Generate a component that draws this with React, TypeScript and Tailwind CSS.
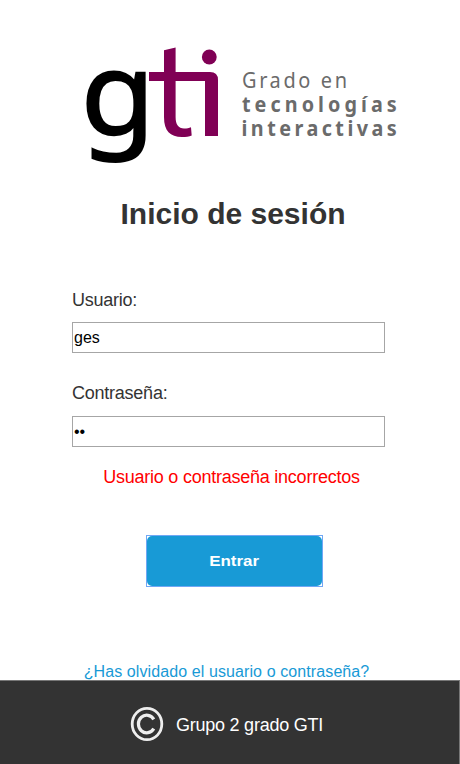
function Logo() {
  return (
    <svg width="312" height="122" viewBox="86 45 312 122" className="ml-[86px] block overflow-visible" role="img">
      <text transform="translate(80.8 134.3) scale(1.045 1)" fontSize="115.5" fontFamily="'Noto Sans', sans-serif" fill="#000" stroke="#000" strokeWidth="1.8">g</text>
      <g fill="#800055">
        <path d="M164 50.3 L175.6 47.5 V117 C175.6 124.5 178.5 128.5 184 128.5 C187 128.5 189 128.1 191 127.2 L191.7 135.4 C189 136.5 186 137 182 137 C170 137 164 131 164 117 Z" />
        <path d="M149 72 H210 Q218 72 218 80 V136 H205 V81 H149 Z" />
        <circle cx="209.3" cy="57" r="7.4" />
      </g>
      <g fill="#6b6b6b" fontFamily="'Noto Sans', sans-serif">
        <text transform="translate(242 88) scale(0.95 1)" fontSize="21" textLength="110.5">Grado en</text>
        <text transform="translate(242 112) scale(0.9 1)" fontSize="22" fontWeight="700" textLength="172">tecnologías</text>
        <text transform="translate(241.5 136) scale(0.9 1)" fontSize="22" fontWeight="700" textLength="172.5">interactivas</text>
      </g>
    </svg>
  );
}

export default function App() {
  return (
    <div className="flex h-[764px] w-[460px] flex-col overflow-hidden bg-white pt-[45px] font-['Liberation_Sans',Arial,sans-serif] text-[#333]">
      <Logo />
      <h1 className="mt-[29px] pl-[6px] text-center text-[30px] leading-[36px] font-bold">Inicio de sesión</h1>
      <form className="flex flex-col pr-[75px] pl-[72px]" onSubmit={(e) => e.preventDefault()}>
        <label htmlFor="user" className="mt-[58px] h-5 text-lg leading-5 tracking-[-0.24px]">Usuario:</label>
        <input id="user" defaultValue="ges" className="mt-3 h-[31px] border border-[#a6a6a6] px-px text-base text-black outline-none" />
        <label htmlFor="pass" className="mt-[30px] h-5 text-lg leading-5 tracking-[-0.24px]">Contraseña:</label>
        <input id="pass" type="password" defaultValue="12" className="mt-[13px] h-[31px] border border-[#a6a6a6] px-px text-base text-black outline-none" />
        <p className="mt-5 pl-[6px] text-center text-lg leading-5 tracking-[-0.24px] whitespace-nowrap text-[#ff0000]">Usuario o contraseña incorrectos</p>
        <div className="mt-[48px] ml-[74px] h-[52px] w-[177px] border border-[#70a7f5]">
          <button className="block h-[50px] w-[175px] rounded-[5px] bg-[#189ad6] text-[15px] font-bold text-white">
            <span className="inline-block scale-x-[1.13] pt-px">Entrar</span>
          </button>
        </div>
      </form>
      <a className="mt-[75px] block h-[18px] shrink-0 pr-[7px] text-center text-base leading-5 tracking-[0.1px] whitespace-nowrap text-[#189ad6]">¿Has olvidado el usuario o contraseña?</a>
      <footer className="flex h-[84px] w-[460px] shrink-0 items-center border-t border-r border-[#777] bg-[#333] pt-[3px] pl-[130px] text-lg text-white">
        <svg width="34" height="36" viewBox="0 0 34 36" fill="none" stroke="#eee" className="mr-3 shrink-0">
          <ellipse cx="17" cy="18" rx="14.8" ry="15.7" strokeWidth="2.8" />
          <path d="M23.8 13.4 A8.3 8.8 0 1 0 23.8 22.6" strokeWidth="3.2" />
        </svg>
        <span className="pt-[2px] leading-5 tracking-[-0.24px] whitespace-nowrap">Grupo 2 grado GTI</span>
      </footer>
    </div>
  );
}
